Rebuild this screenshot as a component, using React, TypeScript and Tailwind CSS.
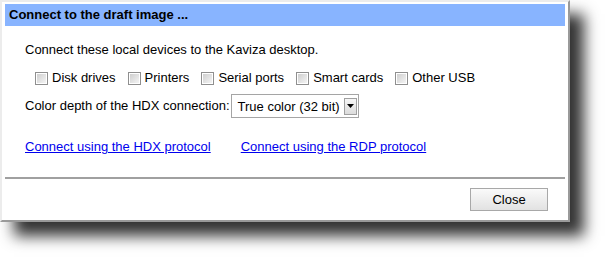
import React from 'react';

const devices = ['Disk drives', 'Printers', 'Serial ports', 'Smart cards', 'Other USB'];

const Checkbox: React.FC<{ label: string }> = ({ label }) => (
  <label className="flex items-center">
    <span className="w-[13px] h-[13px] border border-[#8f8f8f] bg-white p-px mr-[4px]">
      <span className="block w-full h-full bg-gradient-to-br from-[#cfcfcf] to-[#f4f4f4]" />
    </span>
    <span>{label}</span>
  </label>
);

const App: React.FC = () => {
  return (
    <div className="w-[610px] h-[263px] bg-white font-['Liberation_Sans',Arial,sans-serif] text-[13px] text-black">
      <div className="w-[570px] h-[222px] flex flex-col border-2 border-t-[#ececec] border-l-[#ececec] border-r-[#9a9a9a] border-b-[#9a9a9a] bg-white shadow-[14px_14px_14px_rgba(0,0,0,0.8)]">
        {/* title bar */}
        <div className="mx-[3px] mt-[2px] h-[22px] bg-[#88b4ff] flex items-center pl-[4px] font-bold">
          Connect to the draft image ...
        </div>

        <div className="pl-[23px] pt-[16px] h-[151px] flex flex-col">
          <div className="h-[16px] leading-[16px]">Connect these local devices to the Kaviza desktop.</div>

          <div className="flex items-center gap-[12px] pl-[10px] mt-[12px] h-[16px] leading-[16px]">
            {devices.map((d) => (
              <Checkbox key={d} label={d} />
            ))}
          </div>

          <div className="flex items-center mt-[8px] h-[24px]">
            <span className="leading-[16px]">Color depth of the HDX connection:</span>
            <div className="ml-px w-[128px] h-[24px] border border-[#a5a5a5] bg-white flex items-center justify-between pl-[6px] pr-px">
              <span className="leading-[16px] mt-[1px]">True color (32 bit)</span>
              <span className="w-[13px] h-[17px] border border-[#a0a0a0] bg-gradient-to-b from-[#f6f6f6] to-[#dcdcdc] flex items-center justify-center">
                <svg width="7" height="4" viewBox="0 0 7 4">
                  <path d="M0 0h7L3.5 4z" fill="#000" />
                </svg>
              </span>
            </div>
          </div>

          <div className="flex mt-[21px] h-[16px] leading-[16px] gap-[30px]">
            <a href="#" className="text-[#0000ee] underline">Connect using the HDX protocol</a>
            <a href="#" className="text-[#0000ee] underline">Connect using the RDP protocol</a>
          </div>
        </div>

        <div className="mx-[3px] border-t-2 border-[#a0a0a0]" />

        <div className="flex justify-end pr-[20px] pt-[9px]">
          <button className="w-[78px] h-[23px] border border-[#a8a8a8] bg-gradient-to-b from-[#fafafa] to-[#e2e2e2] text-[13px] leading-none">
            Close
          </button>
        </div>
      </div>
    </div>
  );
};

export default App;
